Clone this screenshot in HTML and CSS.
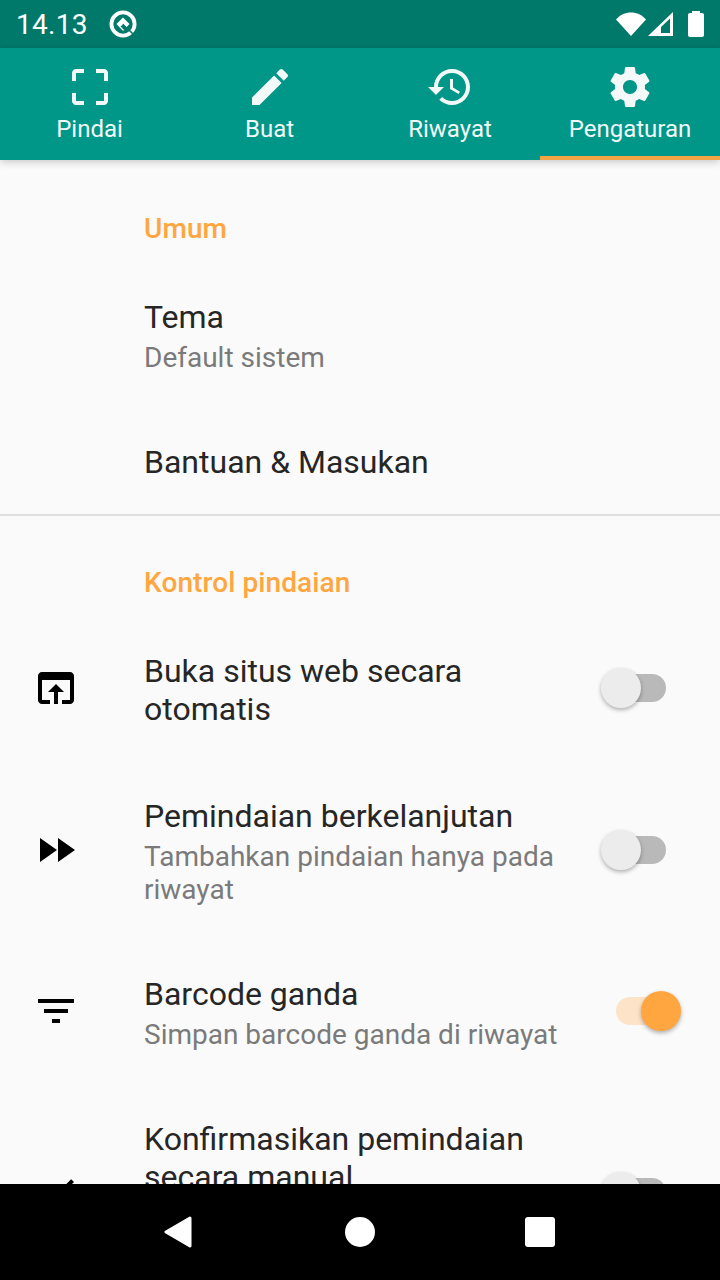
FILE: index.html
```html
<!DOCTYPE html>
<html lang="id">
<head>
  <meta charset="UTF-8">
  <title>Pengaturan</title>
  <link rel="stylesheet" href="styles.css">
</head>
<body>
  <div class="phone">
    <div class="status-bar">
      <span class="clock">14.13</span>
      <svg class="q-icon" viewBox="0 0 28 28">
        <circle cx="14" cy="14" r="11.6" fill="none" stroke="#fff" stroke-width="3.8"/>
        <path d="M14 7.5L20.5 14 17.6 16.9 14.4 13.7 11.6 16.5 15.5 20.4 13.6 20.4 7.5 14z" fill="#fff"/>
        <path d="M17.5 17.5L25 25" stroke="#00796b" stroke-width="1.6"/>
      </svg>
      <div class="status-right">
        <svg class="wifi" viewBox="0 0 30 24"><path d="M0 7.5C4 3 9 0.5 15 0.5S26 3 30 7.5L15 24z" fill="#fff"/></svg>
        <svg class="signal" viewBox="0 0 26 24"><path fill-rule="evenodd" d="M25 0V24H0zM22 6.5L13 15V21H22z" fill="#fff"/></svg>
        <div class="battery"></div>
      </div>
    </div>

    <nav class="tabs">
      <div class="tab">
        <svg class="tab-icon" viewBox="0 0 24 24"><path d="M3 5v4h2V5h4V3H5c-1.1 0-2 .9-2 2zm2 10H3v4c0 1.1.9 2 2 2h4v-2H5v-4zm14 4h-4v2h4c1.1 0 2-.9 2-2v-4h-2v4zm0-16h-4v2h4v4h2V5c0-1.1-.9-2-2-2z"/></svg>
        <span>Pindai</span>
      </div>
      <div class="tab">
        <svg class="tab-icon" viewBox="0 0 24 24"><path d="M3 17.25V21h3.75L17.81 9.94l-3.75-3.75L3 17.25zM20.71 7.04c.39-.39.39-1.02 0-1.41l-2.34-2.34c-.39-.39-1.02-.39-1.41 0l-1.83 1.83 3.75 3.75 1.83-1.83z"/></svg>
        <span>Buat</span>
      </div>
      <div class="tab">
        <svg class="tab-icon" viewBox="0 0 24 24"><path d="M13 3c-4.97 0-9 4.03-9 9H1l3.89 3.89.07.14L9 12H6c0-3.87 3.13-7 7-7s7 3.13 7 7-3.13 7-7 7c-1.93 0-3.68-.79-4.94-2.06l-1.42 1.42C8.27 19.99 10.51 21 13 21c4.97 0 9-4.03 9-9s-4.03-9-9-9zm-1 5v5l4.28 2.54.72-1.21-3.5-2.08V8H12z"/></svg>
        <span>Riwayat</span>
      </div>
      <div class="tab active">
        <svg class="tab-icon" viewBox="0 0 24 24"><path d="M19.43 12.98c.04-.32.07-.64.07-.98s-.03-.66-.07-.98l2.11-1.65c.19-.15.24-.42.12-.64l-2-3.46c-.12-.22-.39-.3-.61-.22l-2.49 1c-.52-.4-1.08-.73-1.69-.98l-.38-2.65C14.46 2.18 14.25 2 14 2h-4c-.25 0-.46.18-.49.42l-.38 2.65c-.61.25-1.17.59-1.69.98l-2.49-1c-.23-.09-.49 0-.61.22l-2 3.46c-.13.22-.07.49.12.64l2.11 1.65c-.04.32-.07.65-.07.98s.03.66.07.98l-2.11 1.65c-.19.15-.24.42-.12.64l2 3.46c.12.22.39.3.61.22l2.49-1c.52.4 1.08.73 1.69.98l.38 2.65c.03.24.24.42.49.42h4c.25 0 .46-.18.49-.42l.38-2.65c.61-.25 1.17-.59 1.69-.98l2.49 1c.23.09.49 0 .61-.22l2-3.46c.12-.22.07-.49-.12-.64l-2.11-1.65zM12 15.5c-1.93 0-3.5-1.57-3.5-3.5s1.57-3.5 3.5-3.5 3.5 1.57 3.5 3.5-1.57 3.5-3.5 3.5z"/></svg>
        <span>Pengaturan</span>
      </div>
    </nav>

    <main class="settings">
      <section class="group">
        <h2 class="group-title">Umum</h2>
        <div class="row">
          <div class="row-icon"></div>
          <div class="row-text">
            <div class="row-title">Tema</div>
            <div class="row-summary">Default sistem</div>
          </div>
        </div>
        <div class="row row-single">
          <div class="row-icon"></div>
          <div class="row-text">
            <div class="row-title">Bantuan &amp; Masukan</div>
          </div>
        </div>
      </section>

      <section class="group group-divided">
        <h2 class="group-title">Kontrol pindaian</h2>
        <div class="row">
          <div class="row-icon">
            <svg viewBox="0 0 24 24"><path d="M19 4H5c-1.11 0-2 .9-2 2v12c0 1.1.89 2 2 2h4v-2H5V8h14v10h-4v2h4c1.1 0 2-.9 2-2V6c0-1.1-.9-2-2-2zm-7 6l-4 4h3v6h2v-6h3l-4-4z"/></svg>
          </div>
          <div class="row-text">
            <div class="row-title">Buka situs web secara otomatis</div>
          </div>
          <div class="switch"><div class="thumb"></div></div>
        </div>
        <div class="row">
          <div class="row-icon">
            <svg viewBox="0 0 24 24"><path d="M4 18l8.5-6L4 6v12zm9-12v12l8.5-6L13 6z"/></svg>
          </div>
          <div class="row-text">
            <div class="row-title">Pemindaian berkelanjutan</div>
            <div class="row-summary">Tambahkan pindaian hanya pada riwayat</div>
          </div>
          <div class="switch"><div class="thumb"></div></div>
        </div>
        <div class="row">
          <div class="row-icon">
            <svg viewBox="0 0 24 24"><path d="M10 18h4v-2h-4v2zM3 6v2h18V6H3zm3 7h12v-2H6v2z"/></svg>
          </div>
          <div class="row-text">
            <div class="row-title">Barcode ganda</div>
            <div class="row-summary">Simpan barcode ganda di riwayat</div>
          </div>
          <div class="switch on"><div class="thumb"></div></div>
        </div>
        <div class="row row-cut">
          <div class="row-icon">
            <svg viewBox="0 0 24 24"><path d="M9 16.17L4.83 12l-1.42 1.41L9 19 21 7l-1.41-1.41z"/></svg>
          </div>
          <div class="row-text">
            <div class="row-title">Konfirmasikan pemindaian secara manual</div>
          </div>
          <div class="switch"><div class="thumb"></div></div>
        </div>
      </section>
    </main>

    <div class="nav-bar">
      <svg class="nav-back" viewBox="0 0 28 32"><path d="M26 2L2 16 26 30z" fill="#fff" stroke="#fff" stroke-width="3" stroke-linejoin="round"/></svg>
      <div class="nav-home"></div>
      <div class="nav-recent"></div>
    </div>
  </div>
</body>
</html>
```

FILE: styles.css
```css
* {
  box-sizing: border-box;
}

body {
  margin: 0;
  font-family: Roboto, "Liberation Sans", sans-serif;
  background: #fafafa;
  color: #262626;
}

.phone {
  width: 720px;
  height: 1280px;
  display: flex;
  flex-direction: column;
  overflow: hidden;
}

/* status bar */
.status-bar {
  height: 48px;
  flex: none;
  background: #00796b;
  color: #fff;
  display: flex;
  align-items: center;
  padding: 0 16px;
}

.clock {
  font-size: 28px;
  letter-spacing: 0.3px;
}

.q-icon {
  width: 28px;
  height: 28px;
  margin-left: 21px;
}

.status-right {
  margin-left: auto;
  display: flex;
  align-items: center;
}

.wifi {
  width: 30px;
  height: 24px;
}

.signal {
  width: 26px;
  height: 24px;
  margin-left: 2px;
}

.battery {
  position: relative;
  width: 16px;
  height: 24px;
  margin: 2px 0 0 14px;
  background: #fff;
  border-radius: 2px;
}

.battery::before {
  content: "";
  position: absolute;
  top: -2px;
  left: 4px;
  width: 8px;
  height: 2px;
  background: #fff;
}

/* tabs */
.tabs {
  height: 112px;
  flex: none;
  display: grid;
  grid-template-columns: 179px 181px 180px 180px;
  background: #009688;
  color: #fff;
  box-shadow: 0 2px 8px rgba(0, 0, 0, 0.2);
  position: relative;
}

.tab {
  display: flex;
  flex-direction: column;
  align-items: center;
  padding-top: 15px;
  font-size: 24px;
  line-height: 28px;
  opacity: 0.95;
}

.tab.active {
  border-bottom: 4px solid #ffa640;
}

.tab-icon {
  width: 48px;
  height: 48px;
  fill: #fff;
  margin-bottom: 4px;
}

/* settings list */
.settings {
  flex: 1;
  min-height: 0;
  overflow: hidden;
}

.group-divided {
  border-top: 2px solid #dedede;
}

.group-title {
  margin: 0;
  padding: 53px 0 18px 144px;
  font-size: 28px;
  font-weight: 500;
  line-height: 32px;
  letter-spacing: 0.1px;
  color: #ffa640;
}

.group-divided .group-title {
  padding-top: 51px;
}

.row {
  display: flex;
  align-items: center;
  padding: 31px 54px 34px 32px;
}

.row-single {
  padding-top: 28px;
  padding-bottom: 30px;
}

.row-icon {
  width: 48px;
  height: 48px;
  flex: none;
  margin-right: 64px;
}

.row-icon svg {
  display: block;
  width: 48px;
  height: 48px;
  fill: #000;
}

.row-text {
  flex: 1;
  min-width: 0;
  padding: 4px 40px 0 0;
}

.row-cut .row-text {
  min-height: 152px;
}

.row-title {
  font-size: 32px;
  line-height: 38px;
}

.row-summary {
  margin-top: 5px;
  font-size: 28px;
  line-height: 33px;
  color: #7a7a7a;
}

.switch {
  position: relative;
  flex: none;
  width: 50px;
  height: 28px;
  border-radius: 14px;
  background: #b9b9b9;
}

.thumb {
  position: absolute;
  top: -6px;
  left: -15px;
  width: 40px;
  height: 40px;
  border-radius: 50%;
  background: #ececec;
  box-shadow: 0 2px 4px rgba(0, 0, 0, 0.3);
}

.switch.on {
  background: #fde4c9;
}

.switch.on .thumb {
  left: 25px;
  background: #ffa640;
}

/* bottom navigation */
.nav-bar {
  height: 96px;
  flex: none;
  background: #000;
  display: grid;
  grid-template-columns: repeat(3, 180px);
  justify-content: center;
  justify-items: center;
  align-items: center;
}

.nav-back {
  width: 28px;
  height: 32px;
  margin-right: 4px;
}

.nav-home {
  width: 30px;
  height: 30px;
  border-radius: 50%;
  background: #fff;
}

.nav-recent {
  width: 30px;
  height: 30px;
  border-radius: 3px;
  background: #fff;
}
```
